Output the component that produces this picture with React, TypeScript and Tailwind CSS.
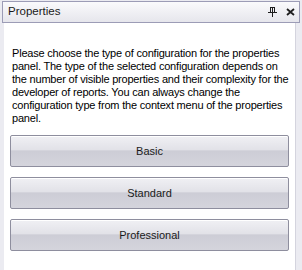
// Properties panel — a docked tool window asking which configuration to use.

const OPTIONS = ['Basic', 'Standard', 'Professional']

function PinIcon() {
  return (
    <svg width="9" height="10" viewBox="0 0 9 10" shapeRendering="crispEdges">
      <path d="M2.5 0.5h4v5h-4z" fill="none" stroke="#1e1e1e" />
      <path d="M4 0h1v5H4z" fill="#1e1e1e" />
      <path d="M0 5h9v1H0zM4 6h1v4H4z" fill="#1e1e1e" />
    </svg>
  )
}

function CloseIcon() {
  return (
    <svg width="9" height="8" viewBox="0 0 9 8">
      <path d="M1 1l7 6M8 1L1 7" stroke="#1e1e1e" strokeWidth="1.8" />
    </svg>
  )
}

export default function App() {
  return (
    <div className="flex h-[270px] w-[302px] flex-col bg-[#ebebf1] font-['Liberation_Sans',Arial,sans-serif] text-[11px] text-black">
      <header className="mx-[2px] mt-[1px] flex h-[22px] shrink-0 items-center border border-[#9c9cb6] bg-gradient-to-b from-[#fafafc] to-[#e6e6ec] pl-[5px] pr-[4px]">
        <span className="text-[11.5px] text-[#1a1a1a]">Properties</span>
        <div className="ml-auto flex items-center gap-[9px]">
          <PinIcon />
          <CloseIcon />
        </div>
      </header>

      <main className="ml-[4px] mr-[6px] flex min-h-0 flex-1 flex-col border-r border-[#d4d4de] bg-white pt-[24px]">
        <p className="pl-[8px] pr-[1px] leading-[13px] tracking-[-0.2px]">
          Please choose the type of configuration for the properties panel. The type of the selected configuration depends on the number of visible properties and their complexity for the developer of reports. You can always change the configuration type from the context menu of the properties panel.
        </p>

        <div className="mx-[6px] mt-[10px] flex flex-col gap-[10px]">
          {OPTIONS.map((o) => (
            <button
              key={o}
              type="button"
              className="flex h-[32px] items-center justify-center rounded-[2px] border border-[#8e8e9e] bg-[linear-gradient(to_bottom,#f0f0f4_0%,#e2e2e8_45%,#cdcdd6_50%,#d4d4dc_100%)] text-[11px] text-[#1a1a1a] shadow-[inset_0_1px_0_#ffffff]"
            >
              {o}
            </button>
          ))}
        </div>
      </main>
    </div>
  )
}
